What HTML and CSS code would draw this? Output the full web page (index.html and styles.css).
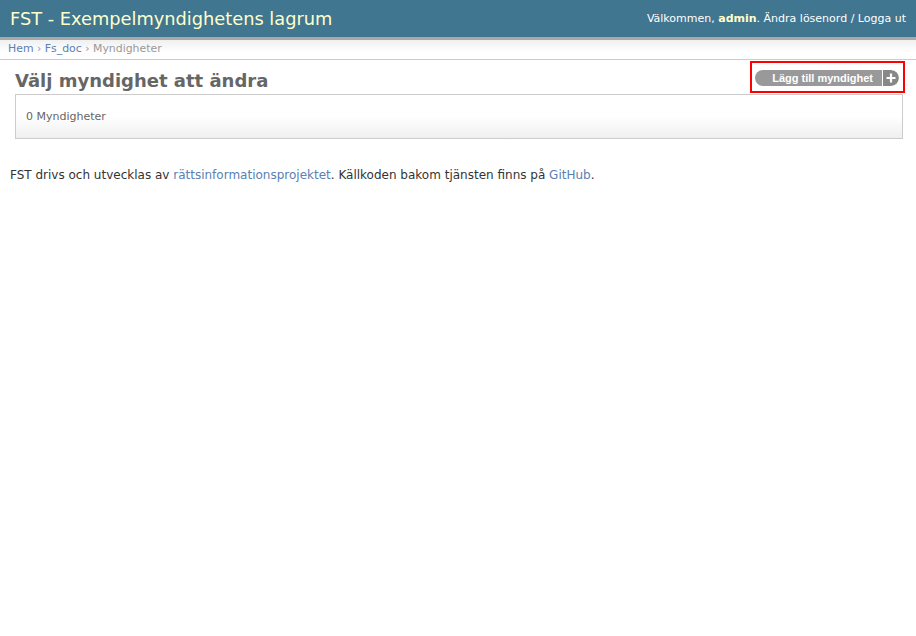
FILE: index.html
```html
<!DOCTYPE html>
<html lang="sv">
<head>
<meta charset="utf-8">
<title>Välj myndighet att ändra</title>
<link rel="stylesheet" href="styles.css">
</head>
<body>
<div class="header">
  <h1 class="branding">FST - Exempelmyndighetens lagrum</h1>
  <div class="user-tools">Välkommen, <strong>admin</strong>. <a href="#">Ändra lösenord</a> / <a href="#">Logga ut</a></div>
</div>
<div class="breadcrumbs"><a href="#">Hem</a> › <a href="#">Fs_doc</a> › Myndigheter</div>
<div class="content">
  <div class="title-row">
    <h1 class="page-title">Välj myndighet att ändra</h1>
    <div class="object-tools">
      <a href="#" class="addlink"><span class="addlabel">Lägg till myndighet</span><span class="addplus"><svg width="14" height="14" viewBox="0 0 14 14"><path d="M7 2.5v9M2.5 7h9" stroke="#fff" stroke-width="2.2"/></svg></span></a>
    </div>
  </div>
  <div class="module">0 Myndigheter</div>
</div>
<p class="footer">FST drivs och utvecklas av <a href="#">rättsinformationsprojektet</a>. Källkoden bakom tjänsten finns på <a href="#">GitHub</a>.</p>
</body>
</html>
```
FILE: styles.css
```css
html, body { margin: 0; padding: 0; background: #fff; }
body { font-family: "DejaVu Sans", Verdana, sans-serif; color: #333; font-size: 12px; }
a { color: #5b80b2; text-decoration: none; }
.header { background: #417690; height: 37px; display: flex; align-items: center; justify-content: space-between; padding: 0 10px; border-bottom: 3px solid #a8a8a8; }
.branding { margin: 0; font-weight: normal; font-size: 17.8px; color: #ffc; }
.user-tools { font-size: 11px; color: #fff; }
.user-tools strong { color: #ffc; }
.user-tools a { color: #fff; }
.breadcrumbs { font-size: 10.9px; color: #999; padding: 3px 8px 4px; background: linear-gradient(#f0f0f0, #fff 12px); border-bottom: 1px solid #ccc; line-height: 12px; }
.content { padding: 0 13px 0 15px; }
.title-row { display: flex; justify-content: space-between; align-items: flex-start; }
.page-title { margin: 10px 0 2px; font-size: 18px; font-weight: bold; color: #666; line-height: 22px; }
.object-tools { margin-top: 10px; margin-right: 4px; position: relative; }
.object-tools::after { content: ""; position: absolute; left: -5px; top: -9px; right: -6px; bottom: -7px; border: 2px solid #f00; }
.addlink { display: flex; align-items: stretch; height: 16px; border-radius: 8px; overflow: hidden; }
.addlabel { background: #999; color: #fff; font-family: "Liberation Sans", Arial, sans-serif; font-weight: bold; font-size: 11px; line-height: 16px; padding: 0 9px 0 17px; border-right: 1px solid #fff; }
.addplus { background: #888; width: 16px; display: flex; align-items: center; justify-content: center; border-radius: 0 8px 8px 0; }
.module { border: 1px solid #ccc; background: linear-gradient(#fff 50%, #efefef); height: 43px; display: flex; align-items: center; padding-left: 10px; font-size: 11px; color: #666; }
.footer { margin: 29px 10px; font-size: 12px; }
```
